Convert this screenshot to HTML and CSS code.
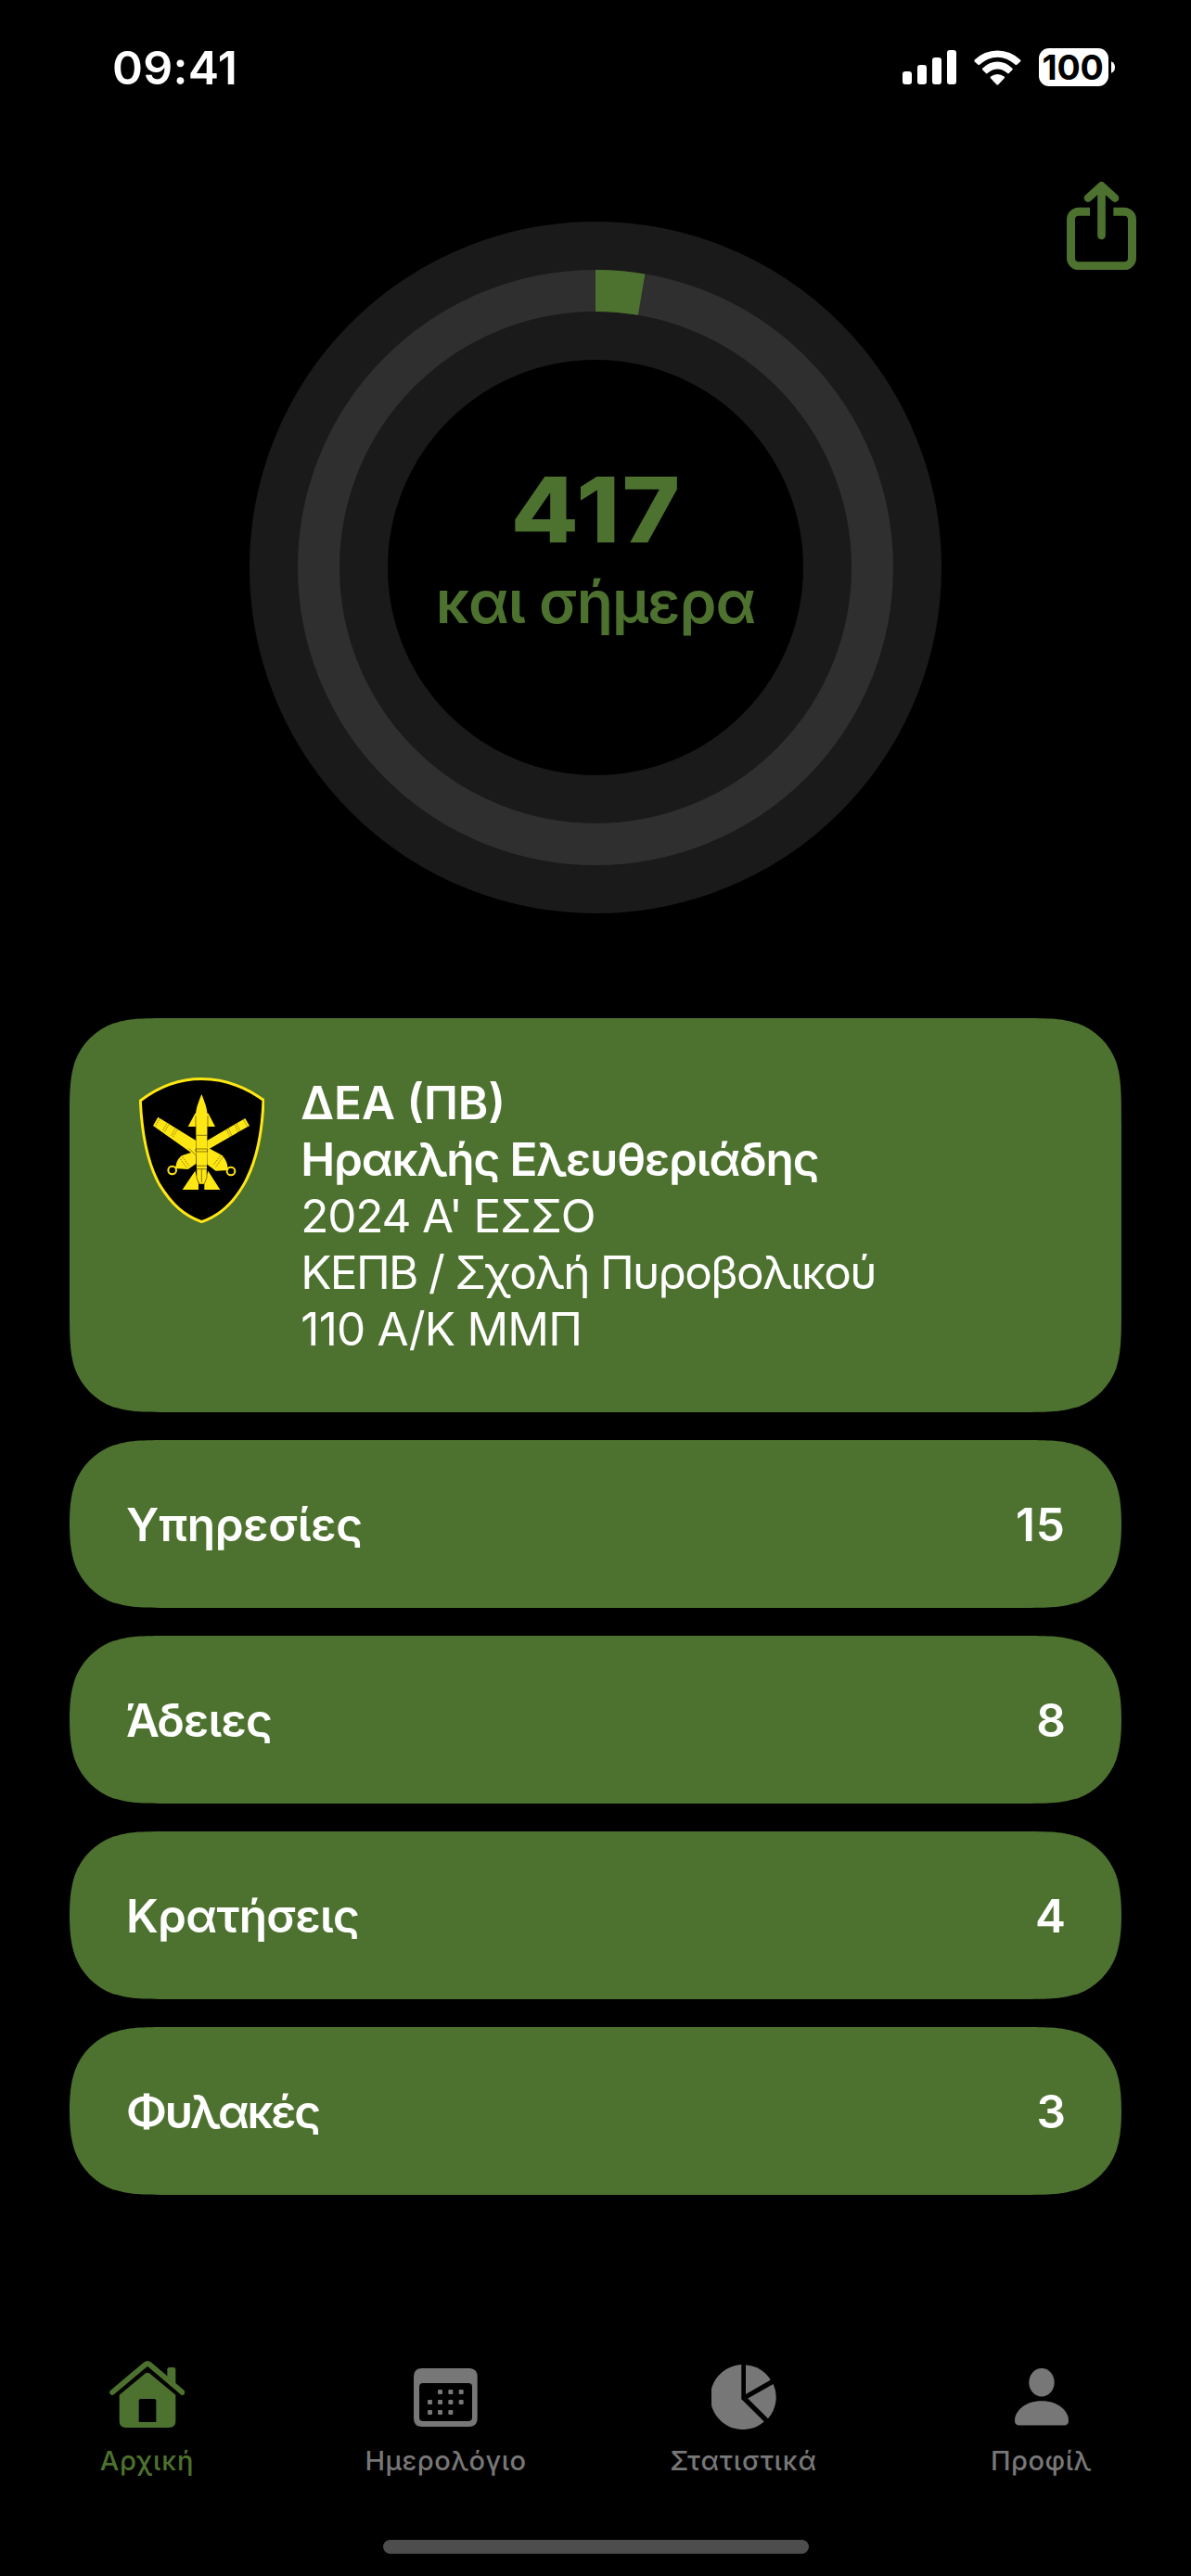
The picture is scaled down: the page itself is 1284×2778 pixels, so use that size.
FILE: index.html
```html
<!DOCTYPE html>
<html lang="el">
<head>
<meta charset="utf-8">
<title>Αρχική</title>
<link rel="stylesheet" href="styles.css">
</head>
<body>
<div class="screen">
  <header class="status">
    <span class="clock">09:41</span>
    <div class="indicators">
      <svg class="signal" viewBox="99 102 174 111"><rect x="99" y="171" width="30" height="42" rx="9"/><rect x="147" y="150" width="30" height="63" rx="9"/><rect x="195" y="126" width="30" height="87" rx="9"/><rect x="243" y="102" width="30" height="111" rx="9"/></svg>
      <svg class="wifi" viewBox="331 101 152 113"><path d="M333 132Q364 102 406.500 102T480 132Q483 135 480 138L469 148Q467 150 464 148Q437 124 406.500 124T349 148Q346 150 344 148L333 138Q331 135 333 132Z"/><path d="M359 159Q380 138 406.500 138T454 159Q457 162 454 165L444 175Q441 178 438 175Q423 162 406.500 162T375 175Q372 178 369 175L359 165Q356 162 359 159Z"/><path d="M385 186Q395 178 406.500 178T428 186Q431 189 428 192L410 211Q406.500 215 403 211L385 192Q382 189 385 186Z"/></svg>
      <div class="battery"><span class="level">100</span><svg class="nub" viewBox="0 0 12 38"><path d="M0 0Q12 5 12 19T0 38Z"/></svg></div>
    </div>
  </header>

  <main class="content">
    <div class="toolbar">
      <svg class="share" viewBox="630 527 225 286"><path d="M705 623.500H669A25.500 25.500 0 0 0 643.500 649V774A25.500 25.500 0 0 0 669 799.500H816A25.500 25.500 0 0 0 841.500 774V649A25.500 25.500 0 0 0 816 623.500H781" stroke-width="27"/><path d="M742.500 541V701M699 580L742.500 540L786 580" stroke-width="26" stroke-linecap="round" stroke-linejoin="round"/></svg>
    </div>

    <section class="progress">
      <svg class="ring" viewBox="-373 -373 746 746">
        <circle class="ring-base" r="298.500"/>
        <circle class="ring-track" r="298.500"/>
        <path class="ring-value" d="M0 -298.500A298.500 298.500 0 0 1 49.630 -294.350"/>
      </svg>
      <div class="ring-label">
        <strong class="days">417</strong>
        <span class="caption">και σήμερα</span>
      </div>
    </section>

    <section class="cards">
      <article class="card profile">
        <svg class="crest" viewBox="60 66 406 472">
          <path d="M64 141Q156 70.500 262 70.500T462 139C458 260 436 345 400 410C362 477 319 514 262 533C205 512 166 478 126 413C88 345 69 255 64 141Z" fill="#000" stroke="#ffe714" stroke-width="9"/>
          <g fill="#ffe714">
            <path d="M121 194L244 270V320L105 222Z"/>
            <path d="M403 198L280 270V301L417 222Z"/>
            <path d="M244 304L197 319Q181 333 179 351L176 360L218 363L244 345Z"/>
            <path d="M280 292L329 318Q344 336 346 353L349 366L308 368L280 347Z"/>
            <path d="M241 182L218 225H306L284 182Z"/>
            <path d="M262 120C253 143 243 166 243 190L246 360V390L254 410H271L279 390V360L281 190C281 166 271 143 262 120Z"/>
            <path d="M241 368L200 429H252V409ZM283 368L322 429H271V409Z"/>
          </g>
          <g fill="none" stroke="#ffe714" stroke-width="6"><circle cx="167" cy="366" r="13"/><circle cx="357" cy="369" r="13"/></g>
          <g fill="none" stroke="#4d3f00" stroke-width="2">
            <path d="M246 253H280M243 297H281V306H243ZM246 352H279M246 362H279M262 363V405M246 363V390L254 409M279 363V390L271 409M243 190V234M282 190V232"/>
            <path d="M245 319L222 296"/>
            <path stroke-dasharray="4 3" d="M127 198L112 224M149 215L136 239M155 219L142 243M176 232L163 256M182 236L169 260M397 202L411 226M375 215L387 239M369 219L381 243M349 231L361 256M343 235L355 260M190 324L215 360M198 319L223 354M333 320L308 356M325 316L300 350"/>
          </g>
        </svg>
        <div class="details">
          <p class="line rank">ΔΕΑ (ΠΒ)</p>
          <p class="line full-name">Ηρακλής Ελευθεριάδης</p>
          <p class="line series">2024 Α' ΕΣΣΟ</p>
          <p class="line school">ΚΕΠΒ / Σχολή Πυροβολικού</p>
          <p class="line unit">110 Α/Κ ΜΜΠ</p>
        </div>
      </article>
      <article class="card counter duties"><span class="name">Υπηρεσίες</span><span class="count">15</span></article>
      <article class="card counter leaves"><span class="name">Άδειες</span><span class="count">8</span></article>
      <article class="card counter detentions"><span class="name">Κρατήσεις</span><span class="count">4</span></article>
      <article class="card counter prisons"><span class="name">Φυλακές</span><span class="count">3</span></article>
    </section>
  </main>

  <nav class="tabs">
    <a class="tab active">
      <span class="glyph"><svg class="home" viewBox="113 78 245 216"><path d="M122 180L229 90Q236 84 243 90L349 180" fill="none" stroke="currentColor" stroke-width="17" stroke-linecap="round"/><path d="M300 132V106Q300 99 307 99H320Q327 99 327 106V156Z"/><path fill-rule="evenodd" d="M145 188L230 118Q236 114 242 118L327 188V273Q327 294 306 294H166Q145 294 145 273ZM214 201Q208 201 208 207V276H264V207Q264 201 258 201Z"/></svg></span>
      <span class="tab-name">Αρχική</span>
    </a>
    <a class="tab">
      <span class="glyph"><svg class="calendar" viewBox="1098 102 206 189"><path fill-rule="evenodd" d="M1125 102H1277Q1304 102 1304 129V264Q1304 291 1277 291H1125Q1098 291 1098 264V129Q1098 102 1125 102ZM1128 150Q1116 150 1116 162V261Q1116 273 1128 273H1275Q1287 273 1287 261V162Q1287 150 1275 150Z"/><g><rect x="1176" y="171" width="15" height="15" rx="3"/><rect x="1210" y="171" width="15" height="15" rx="3"/><rect x="1244" y="171" width="15" height="15" rx="3"/><rect x="1143" y="204" width="15" height="15" rx="3"/><rect x="1176" y="204" width="15" height="15" rx="3"/><rect x="1210" y="204" width="15" height="15" rx="3"/><rect x="1244" y="204" width="15" height="15" rx="3"/><rect x="1143" y="237" width="15" height="15" rx="3"/><rect x="1176" y="237" width="15" height="15" rx="3"/><rect x="1210" y="237" width="15" height="15" rx="3"/></g></svg></span>
      <span class="tab-name">Ημερολόγιο</span>
    </a>
    <a class="tab stats">
      <span class="glyph"><svg class="pie" viewBox="-35 -35 70 70"><path d="M-2.700 -34.900V2.200L21.800 26.500A35 35 0 1 1 -2.700 -34.900Z"/><path d="M2 -34.500A35 35 0 0 1 28.800 -18.500L2 -3Z"/><path d="M31.700 -14A35 35 0 0 1 26 23.200L4.200 1.500Z"/></svg></span>
      <span class="tab-name">Στατιστικά</span>
    </a>
    <a class="tab">
      <span class="glyph"><svg class="person" viewBox="0 0 58 61.500"><ellipse cx="29" cy="15.200" rx="13.700" ry="15.200"/><path d="M0 56.500C0 46 11 35.300 29 35.300S58 46 58 56.500Q58 61.500 53 61.500H5Q0 61.500 0 56.500Z"/></svg></span>
      <span class="tab-name">Προφίλ</span>
    </a>
  </nav>
  <div class="home-bar"></div>
</div>
</body>
</html>
```
FILE: styles.css
```css
* { box-sizing: border-box; }

body {
  margin: 0;
  background: #000;
  font-family: Inter, "Noto Sans", sans-serif;
  font-kerning: normal;
}

.screen {
  width: 1284px;
  height: 2778px;
  display: flex;
  flex-direction: column;
  background: #000;
  color: #fff;
  overflow: hidden;
}

svg { display: block; fill: currentColor; }

/* status bar */
.status {
  height: 141px;
  padding: 42px 82px 0 121px;
  display: flex;
  justify-content: space-between;
  align-items: flex-start;
}
.clock {
  font-size: 50px;
  line-height: 63px;
  font-weight: 600;
  letter-spacing: 0.3px;
}
.indicators { display: flex; align-items: center; padding-top: 10px; }
.signal { width: 58px; height: 37px; margin-right: 19px; }
.wifi { width: 51px; height: 38px; margin-right: 19px; }
.battery { display: flex; align-items: center; gap: 3px; }
.level {
  width: 75px;
  height: 41px;
  border-radius: 11px;
  background: #fff;
  color: #000;
  font-size: 37.5px;
  line-height: 41px;
  font-weight: 700;
  letter-spacing: -0.2px;
  text-align: center;
  text-indent: -2px;
}
.nub { width: 4px; height: 13px; }

.content { display: flex; flex-direction: column; height: 2373px; }

.toolbar {
  height: 98px;
  padding: 55px 59px 0 0;
  display: flex;
  justify-content: flex-end;
}
.share {
  flex: none;
  width: 75px;
  height: 95.3px;
  fill: none;
  stroke: #4d712e;
}

/* countdown ring */
.progress {
  display: grid;
  width: 746px;
  height: 746px;
  align-self: center;
  color: #4d712e;
}
.ring, .ring-label { grid-area: 1 / 1; }
.ring { fill: none; }
.ring-base { stroke: #1a1a1a; stroke-width: 149; }
.ring-track { stroke: #2f2f2f; stroke-width: 45; }
.ring-value { stroke: #4d712e; stroke-width: 45; }
.ring-label {
  display: flex;
  flex-direction: column;
  align-items: center;
  padding-top: 251px;
}
.days {
  font-size: 98px;
  line-height: 119px;
  font-weight: 850;
  letter-spacing: 2px;
  text-indent: 1px;
  transform: scaleX(1.09);
}
.caption {
  font-size: 64px;
  line-height: 80px;
  font-weight: 600;
  letter-spacing: -1px;
  white-space: nowrap;
}

/* cards */
.cards {
  display: flex;
  flex-direction: column;
  gap: 30px;
  padding: 113px 75px 0;
}
.card { background: #4d712e; display: flex; }
.profile {
  height: 425px;
  padding: 61px 0 0 75px;
  gap: 39px;
  clip-path: path("M114.65 0H1019.35C1052.36 0 1068.87 0 1083.75 4.91L1086.64 5.62C1106.04 12.68 1121.32 27.96 1128.38 47.36C1134 65.13 1134 81.64 1134 114.65V310.35C1134 343.36 1134 359.87 1128.38 377.64C1121.32 397.04 1106.04 412.32 1086.64 419.38L1083.75 420.09C1068.87 425 1052.36 425 1019.35 425H114.65C81.64 425 65.13 425 50.25 420.09L47.36 419.38C27.96 412.32 12.68 397.04 5.62 377.64C0 359.87 0 343.36 0 310.35V114.65C0 81.64 0 65.13 5.62 47.36C12.68 27.96 27.96 12.68 47.36 5.62L50.25 4.91C65.13 0 81.64 0 114.65 0Z");
}
.crest { flex: none; width: 135.3px; height: 157.3px; margin-top: 3px; }
.details { display: flex; flex-direction: column; }
.line {
  margin: 0;
  font-size: 49.5px;
  line-height: 61px;
  font-weight: 400;
  white-space: nowrap;
}
.rank { font-weight: 600; }
.full-name { font-weight: 600; letter-spacing: -1.15px; }
.series { letter-spacing: -1.2px; }
.school { letter-spacing: -1.7px; }
.unit { letter-spacing: -0.8px; }

.counter {
  height: 181px;
  padding: 1px 60px 0 61px;
  justify-content: space-between;
  align-items: center;
  font-size: 49.5px;
  line-height: 61px;
  font-weight: 600;
  clip-path: path("M114.65 0H1019.35C1052.36 0 1068.87 0 1083.75 4.91L1086.64 5.62C1106.04 12.68 1121.32 27.96 1128.38 47.36C1133 61 1134 75 1134 90.500C1134 106 1133 120 1128.38 133.64C1121.32 153.04 1106.04 168.32 1086.64 175.38L1083.75 176.09C1068.87 181 1052.36 181 1019.35 181H114.65C81.64 181 65.13 181 50.25 176.09L47.36 175.38C27.96 168.32 12.68 153.04 5.62 133.64C1 120 0 106 0 90.500C0 75 1 61 5.62 47.36C12.68 27.96 27.96 12.68 47.36 5.62L50.25 4.91C65.13 0 81.64 0 114.65 0Z");
}
.duties { letter-spacing: -0.3px; }
.duties .count { letter-spacing: 1px; }
.leaves .name { letter-spacing: -0.8px; }
.detentions .name { letter-spacing: -0.7px; }
.prisons .name { letter-spacing: -2.3px; }

/* tab bar */
.tabs {
  display: grid;
  grid-template-columns: repeat(4, 321px);
  height: 225px;
  padding-top: 31px;
  margin-left: -1px;
  color: #777;
}
.tab { display: flex; flex-direction: column; align-items: center; }
.active { color: #4d712e; padding-right: 2px; }
.glyph { height: 80px; display: flex; align-items: center; }
.home { width: 81.7px; height: 72px; margin-bottom: 6px; }
.calendar { width: 68.7px; height: 63px; }
.pie { width: 70px; height: 70px; }
.person { width: 58px; height: 61.5px; }
.tab-name {
  margin-top: 11px;
  font-size: 29px;
  line-height: 36px;
  font-weight: 500;
  letter-spacing: 0.5px;
}
.active .tab-name { letter-spacing: 0.9px; }
.stats .tab-name { letter-spacing: 0.9px; }
.home-bar {
  align-self: center;
  width: 459px;
  height: 15px;
  border-radius: 8px;
  background: #4d4d4d;
}
```
